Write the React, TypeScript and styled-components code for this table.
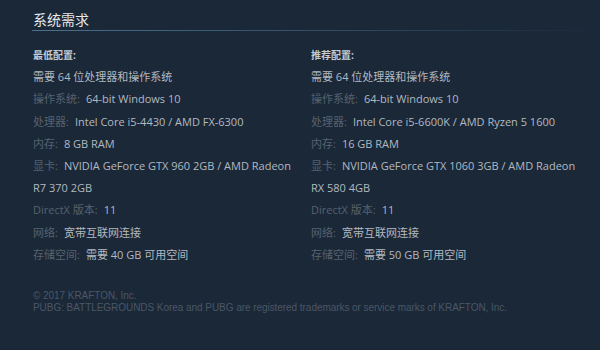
import styled, { createGlobalStyle } from 'styled-components';

const GlobalStyle = createGlobalStyle`
  html, body {
    margin: 0;
    padding: 0;
    background: #1b2838;
  }
`;

const Page = styled.div`
  width: 600px;
  height: 350px;
  box-sizing: border-box;
  padding: 10px 0 0 33px;
  background: #1b2838;
  font-family: 'Open Sans', 'Noto Sans CJK SC', sans-serif;
  overflow: hidden;
`;

const Title = styled.h2`
  margin: 0;
  font-size: 14px;
  line-height: 20px;
  font-weight: normal;
  color: #e6e9eb;
  padding-bottom: 3px;

  &:after {
    content: '';
    display: block;
    height: 1px;
    margin-left: -1px;
    background: linear-gradient(to right, #4a7190 0%, #34526c 45%, rgba(27, 40, 56, 0) 100%);
  }
`;

const Columns = styled.div`
  display: grid;
  grid-template-columns: 278px 278px;
  margin-top: 10px;
`;

const Column = styled.div`
  font-size: 11px;
  line-height: 22.2px;
  color: #b2b9c0;
  padding-right: 9px;
`;

const ColumnHead = styled.div`
  font-size: 10px;
  font-weight: bold;
  color: #c3ccd4;
`;

const Row = styled.div``;

const Label = styled.span`
  color: #56626f;
  margin-right: 6px;
`;

const Footer = styled.div`
  margin-top: 24px;
  font-family: 'Liberation Sans', Arial, sans-serif;
  font-size: 10px;
  letter-spacing: -0.05px;
  line-height: 12px;
  color: #4a5767;
`;

type Spec = { label?: string; value: string };

const minimum: Spec[] = [
  { value: '需要 64 位处理器和操作系统' },
  { label: '操作系统:', value: '64-bit Windows 10' },
  { label: '处理器:', value: 'Intel Core i5-4430 / AMD FX-6300' },
  { label: '内存:', value: '8 GB RAM' },
  { label: '显卡:', value: 'NVIDIA GeForce GTX 960 2GB / AMD Radeon R7 370 2GB' },
  { label: 'DirectX 版本:', value: '11' },
  { label: '网络:', value: '宽带互联网连接' },
  { label: '存储空间:', value: '需要 40 GB 可用空间' },
];

const recommended: Spec[] = [
  { value: '需要 64 位处理器和操作系统' },
  { label: '操作系统:', value: '64-bit Windows 10' },
  { label: '处理器:', value: 'Intel Core i5-6600K / AMD Ryzen 5 1600' },
  { label: '内存:', value: '16 GB RAM' },
  { label: '显卡:', value: 'NVIDIA GeForce GTX 1060 3GB / AMD Radeon RX 580 4GB' },
  { label: 'DirectX 版本:', value: '11' },
  { label: '网络:', value: '宽带互联网连接' },
  { label: '存储空间:', value: '需要 50 GB 可用空间' },
];

const SpecColumn = ({ title, specs }: { title: string; specs: Spec[] }) => (
  <Column>
    <ColumnHead>{title}</ColumnHead>
    {specs.map((s, i) => (
      <Row key={i}>
        {s.label && <Label>{s.label}</Label>}
        {s.value}
      </Row>
    ))}
  </Column>
);

export default function App() {
  return (
    <>
      <GlobalStyle />
      <Page>
        <Title>系统需求</Title>
        <Columns>
          <SpecColumn title="最低配置:" specs={minimum} />
          <SpecColumn title="推荐配置:" specs={recommended} />
        </Columns>
        <Footer>
          © 2017 KRAFTON, Inc.
          <br />
          PUBG: BATTLEGROUNDS Korea and PUBG are registered trademarks or service marks of KRAFTON, Inc.
        </Footer>
      </Page>
    </>
  );
}
